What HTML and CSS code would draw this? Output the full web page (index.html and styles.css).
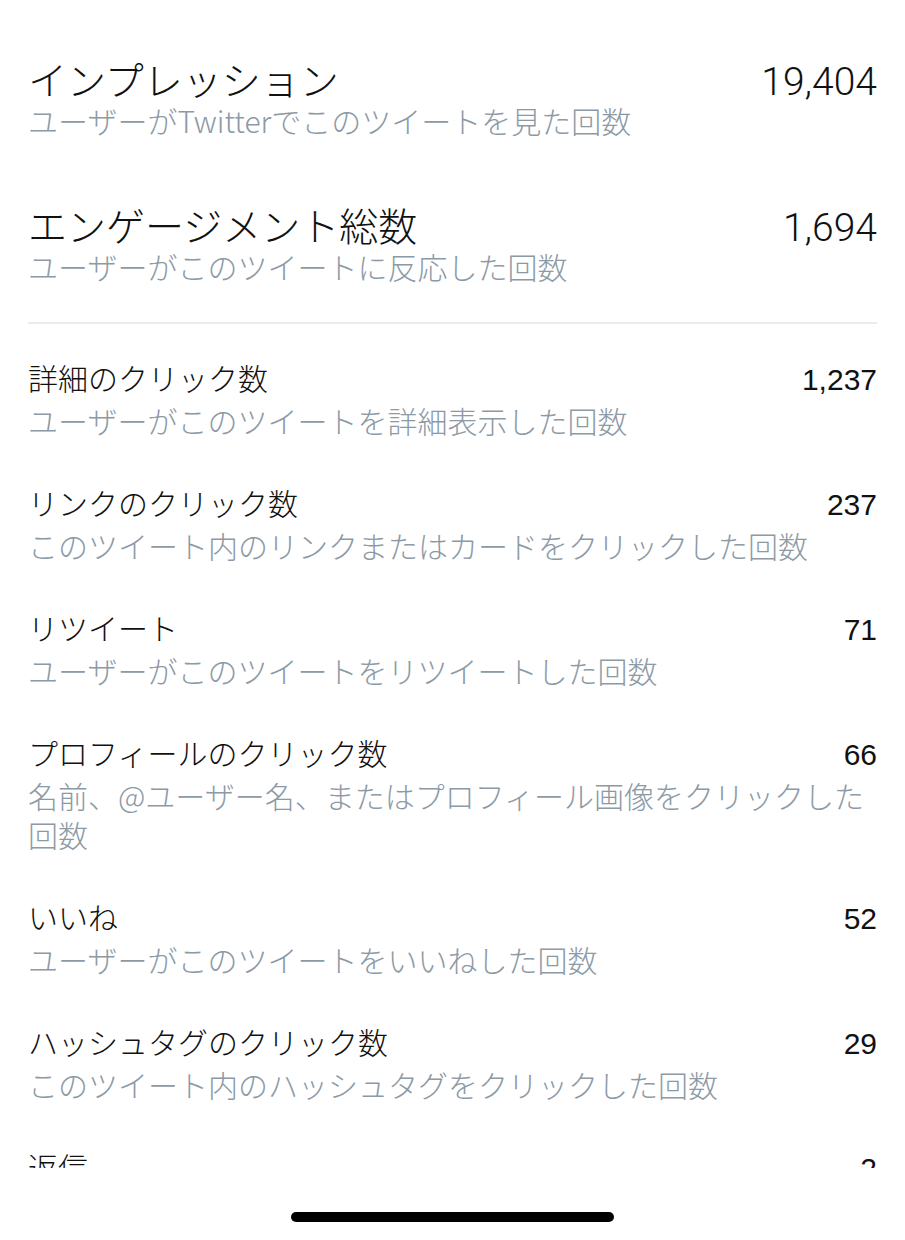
FILE: index.html
```html
<!DOCTYPE html>
<html lang="ja">
<head>
<meta charset="utf-8">
<title>ツイートアクティビティ</title>
<link rel="stylesheet" href="styles.css">
</head>
<body>
<div class="screen">
  <div class="content">
    <section class="summary">
      <div class="summary-item">
        <div class="head head-lg">
          <span class="label-lg">インプレッション</span>
          <span class="num-lg">19,404</span>
        </div>
        <p class="desc">ユーザーがTwitterでこのツイートを見た回数</p>
      </div>
      <div class="summary-item">
        <div class="head head-lg">
          <span class="label-lg">エンゲージメント総数</span>
          <span class="num-lg">1,694</span>
        </div>
        <p class="desc">ユーザーがこのツイートに反応した回数</p>
      </div>
    </section>
    <hr class="divider">
    <section class="rows">
      <div class="row">
        <div class="head"><span class="label">詳細のクリック数</span><span class="num">1,237</span></div>
        <p class="desc">ユーザーがこのツイートを詳細表示した回数</p>
      </div>
      <div class="row">
        <div class="head"><span class="label">リンクのクリック数</span><span class="num">237</span></div>
        <p class="desc">このツイート内のリンクまたはカードをクリックした回数</p>
      </div>
      <div class="row">
        <div class="head"><span class="label">リツイート</span><span class="num">71</span></div>
        <p class="desc">ユーザーがこのツイートをリツイートした回数</p>
      </div>
      <div class="row">
        <div class="head"><span class="label">プロフィールのクリック数</span><span class="num">66</span></div>
        <p class="desc">名前、@ユーザー名、またはプロフィール画像をクリックした回数</p>
      </div>
      <div class="row">
        <div class="head"><span class="label">いいね</span><span class="num">52</span></div>
        <p class="desc">ユーザーがこのツイートをいいねした回数</p>
      </div>
      <div class="row">
        <div class="head"><span class="label">ハッシュタグのクリック数</span><span class="num">29</span></div>
        <p class="desc">このツイート内のハッシュタグをクリックした回数</p>
      </div>
      <div class="row">
        <div class="head"><span class="label">返信</span><span class="num">2</span></div>
        <p class="desc">ユーザーがこのツイートに返信した回数</p>
      </div>
    </section>
  </div>
  <div class="footer">
    <div class="home-indicator"></div>
  </div>
</div>
</body>
</html>
```

FILE: styles.css
```css
html, body {
  margin: 0;
  padding: 0;
  background: #ffffff;
}

body {
  width: 905px;
  height: 1240px;
  overflow: hidden;
  font-family: "Noto Sans CJK JP", "Noto Sans", sans-serif;
  color: #111111;
}

.screen {
  display: flex;
  flex-direction: column;
  height: 1240px;
}

.content {
  height: 1168px;
  overflow: hidden;
  padding: 0 28px;
  box-sizing: border-box;
  flex: none;
}

.summary {
  display: flex;
  flex-direction: column;
  gap: 62px;
  padding-top: 56px;
}

.head {
  display: flex;
  justify-content: space-between;
  align-items: baseline;
  height: 47px;
}

.head-lg {
  height: 45px;
}

.label-lg {
  font-size: 39px;
  line-height: 45px;
  font-weight: 300;
}

.num-lg {
  font-family: Roboto, "Liberation Sans", Arial, sans-serif;
  font-size: 39px;
  line-height: 1;
  font-weight: 300;
}

.desc {
  margin: 0;
  font-size: 30px;
  line-height: 39px;
  color: #8c9aa6;
  font-weight: 300;
}

.divider {
  border: none;
  height: 2px;
  background: #e6ecf0;
  margin: 36px 0 30px;
}

.rows {
  display: flex;
  flex-direction: column;
  gap: 39px;
}

.label {
  font-size: 30px;
  line-height: 47px;
  font-weight: 300;
}

.num {
  font-family: "Liberation Sans", Arial, sans-serif;
  font-size: 30px;
  line-height: 1;
  font-weight: 400;
}

.footer {
  flex: 1;
  display: flex;
  justify-content: center;
  align-items: flex-start;
  padding-top: 44px;
  background: #ffffff;
}

.home-indicator {
  width: 323px;
  height: 10px;
  border-radius: 5px;
  background: #000000;
}
```
